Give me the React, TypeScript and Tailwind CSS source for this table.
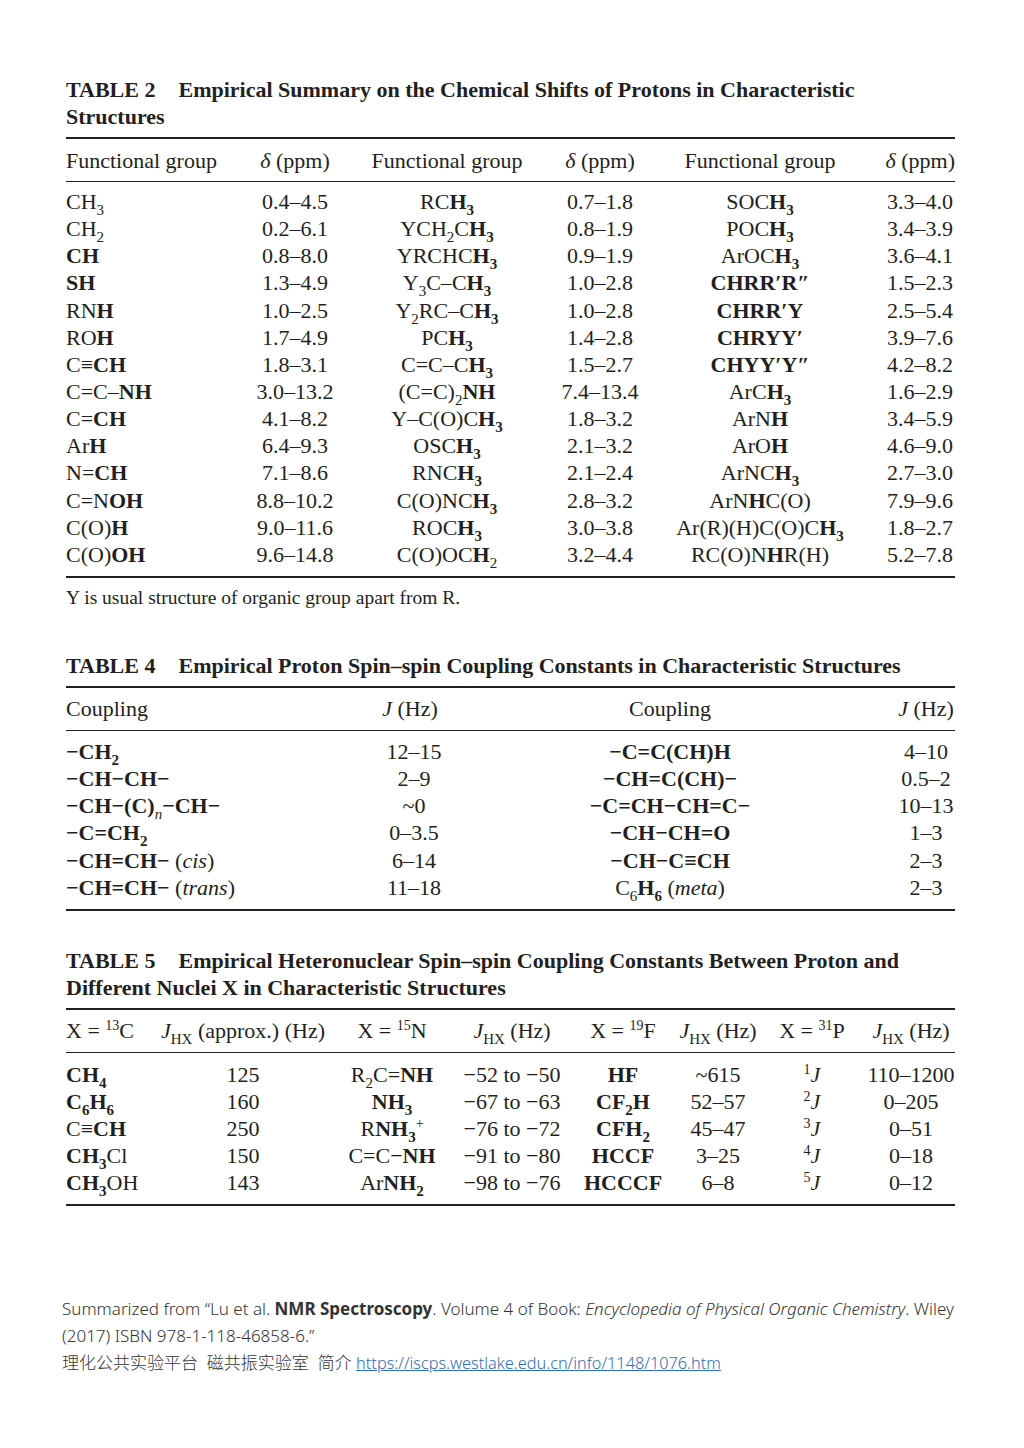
import React from "react";

type Align = "l" | "c" | "r";

const B: React.FC<{ children: React.ReactNode }> = ({ children }) => <b className="font-bold">{children}</b>;
const Sb: React.FC<{ children: React.ReactNode }> = ({ children }) => (
    <sub className="text-[15px] -bottom-[6px]">{children}</sub>
);
const Sp: React.FC<{ children: React.ReactNode }> = ({ children }) => (
    <sup className="text-[14px] -top-[8px]">{children}</sup>
);
const I: React.FC<{ children: React.ReactNode }> = ({ children }) => <i className="italic">{children}</i>;

// one inline span inside the flex box so subs/sups stay inline
const Cell: React.FC<{ a: Align; children?: React.ReactNode; className?: string }> = ({ a, children, className }) => {
    const j = a === "l" ? "justify-start" : a === "c" ? "justify-center" : "justify-end";
    return (
        <div className={`flex whitespace-nowrap ${j} ${className ?? ""}`}>
            <span>{children}</span>
        </div>
    );
};

const Title: React.FC<{ num: string; children: React.ReactNode }> = ({ num, children }) => (
    <h2 className="font-bold text-[22px] leading-[27px]">
        <span className="mr-[23px]">TABLE {num}</span>
        {children}
    </h2>
);

// ---------- Table 2 ----------
const t2Cols = "grid grid-cols-[160px_138px_166px_140px_180px_105px]";
const t2Align: Align[] = ["l", "c", "c", "c", "c", "r"];
const CH3b = <>C<B>H<Sb>3</Sb></B></>;

const t2Rows: React.ReactNode[][] = [
    [<>CH<Sb>3</Sb></>, "0.4–4.5", <>R{CH3b}</>, "0.7–1.8", <>SO{CH3b}</>, "3.3–4.0"],
    [<>CH<Sb>2</Sb></>, "0.2–6.1", <>YCH<Sb>2</Sb>{CH3b}</>, "0.8–1.9", <>PO{CH3b}</>, "3.4–3.9"],
    [<B>CH</B>, "0.8–8.0", <>YRCH{CH3b}</>, "0.9–1.9", <>ArO{CH3b}</>, "3.6–4.1"],
    [<B>SH</B>, "1.3–4.9", <>Y<Sb>3</Sb>C–{CH3b}</>, "1.0–2.8", <B>CHRR′R″</B>, "1.5–2.3"],
    [<>RN<B>H</B></>, "1.0–2.5", <>Y<Sb>2</Sb>RC–{CH3b}</>, "1.0–2.8", <B>CHRR′Y</B>, "2.5–5.4"],
    [<>RO<B>H</B></>, "1.7–4.9", <>P{CH3b}</>, "1.4–2.8", <B>CHRYY′</B>, "3.9–7.6"],
    [<>C≡<B>CH</B></>, "1.8–3.1", <>C=C–{CH3b}</>, "1.5–2.7", <B>CHYY′Y″</B>, "4.2–8.2"],
    [<>C=C–<B>NH</B></>, "3.0–13.2", <>(C=C)<Sb>2</Sb><B>NH</B></>, "7.4–13.4", <>Ar{CH3b}</>, "1.6–2.9"],
    [<>C=<B>CH</B></>, "4.1–8.2", <>Y–C(O){CH3b}</>, "1.8–3.2", <>ArN<B>H</B></>, "3.4–5.9"],
    [<>Ar<B>H</B></>, "6.4–9.3", <>OS{CH3b}</>, "2.1–3.2", <>ArO<B>H</B></>, "4.6–9.0"],
    [<>N=<B>CH</B></>, "7.1–8.6", <>RN{CH3b}</>, "2.1–2.4", <>ArN{CH3b}</>, "2.7–3.0"],
    [<>C=N<B>OH</B></>, "8.8–10.2", <>C(O)N{CH3b}</>, "2.8–3.2", <>ArN<B>H</B>C(O)</>, "7.9–9.6"],
    [<>C(O)<B>H</B></>, "9.0–11.6", <>RO{CH3b}</>, "3.0–3.8", <>Ar(R)(H)C(O){CH3b}</>, "1.8–2.7"],
    [<>C(O)<B>OH</B></>, "9.6–14.8", <>C(O)OC<B>H</B><Sb>2</Sb></>, "3.2–4.4", <>RC(O)N<B>H</B>R(H)</>, "5.2–7.8"],
];

// ---------- Table 4 ----------
const t4Cols = "grid grid-cols-[260px_168px_352px_109px]";
const t4Rows: React.ReactNode[][] = [
    [<B>−CH<Sb>2</Sb></B>, "12–15", <B>−C=C(CH)H</B>, "4–10"],
    [<B>−CH−CH−</B>, "2–9", <B>−CH=C(CH)−</B>, "0.5–2"],
    [<><B>−CH−(C)</B><Sb><I>n</I></Sb><B>−CH−</B></>, "~0", <B>−C=CH−CH=C−</B>, "10–13"],
    [<B>−C=CH<Sb>2</Sb></B>, "0–3.5", <B>−CH−CH=O</B>, "1–3"],
    [<><B>−CH=CH−</B> (<I>cis</I>)</>, "6–14", <B>−CH−C≡CH</B>, "2–3"],
    [<><B>−CH=CH−</B> (<I>trans</I>)</>, "11–18", <>C<Sb>6</Sb><B>H<Sb>6</Sb></B> (<I>meta</I>)</>, "2–3"],
];

// ---------- Table 5 ----------
const t5Cols = "grid grid-cols-[102px_150px_148px_92px_130px_60px_128px_70px]";
const JHX = <><I>J</I><Sb>HX</Sb></>;
const t5Head: React.ReactNode[] = [
    <>X = <Sp>13</Sp>C</>,
    <>{JHX} (approx.) (Hz)</>,
    <>X = <Sp>15</Sp>N</>,
    <>{JHX} (Hz)</>,
    <>X = <Sp>19</Sp>F</>,
    <>{JHX} (Hz)</>,
    <>X = <Sp>31</Sp>P</>,
    <>{JHX} (Hz)</>,
];
const t5Rows: React.ReactNode[][] = [
    [<B>CH<Sb>4</Sb></B>, "125", <>R<Sb>2</Sb>C=<B>NH</B></>, "−52 to −50", <B>HF</B>, "~615", <><Sp>1</Sp><I>J</I></>, "110–1200"],
    [<B>C<Sb>6</Sb>H<Sb>6</Sb></B>, "160", <B>NH<Sb>3</Sb></B>, "−67 to −63", <B>CF<Sb>2</Sb>H</B>, "52–57", <><Sp>2</Sp><I>J</I></>, "0–205"],
    [<>C≡<B>CH</B></>, "250", <>R<B>NH<Sb>3</Sb></B><Sp>+</Sp></>, "−76 to −72", <B>CFH<Sb>2</Sb></B>, "45–47", <><Sp>3</Sp><I>J</I></>, "0–51"],
    [<><B>CH<Sb>3</Sb></B>Cl</>, "150", <>C=C−<B>NH</B></>, "−91 to −80", <B>HCCF</B>, "3–25", <><Sp>4</Sp><I>J</I></>, "0–18"],
    [<><B>CH<Sb>3</Sb></B>OH</>, "143", <>Ar<B>NH<Sb>2</Sb></B></>, "−98 to −76", <B>HCCCF</B>, "6–8", <><Sp>5</Sp><I>J</I></>, "0–12"],
];

const App: React.FC = () => {
    return (
        <div className="w-[1024px] min-h-[1448px] bg-white text-[#231f20]">
            <div className="ml-[66px] w-[889px] pt-[76px] font-['Liberation_Serif',serif] text-[22px]">
                {/* TABLE 2 */}
                <Title num="2">
                    Empirical Summary on the Chemical Shifts of Protons in Characteristic
                    <br />
                    Structures
                </Title>
                <div className="mt-[7px] border-t-[2px] border-[#231f20]" />
                <div className={`${t2Cols} h-[42px] items-center`}>
                    <Cell a="l">Functional group</Cell>
                    <Cell a="c"><I>δ</I> (ppm)</Cell>
                    <Cell a="c">Functional group</Cell>
                    <Cell a="c"><I>δ</I> (ppm)</Cell>
                    <Cell a="c">Functional group</Cell>
                    <Cell a="r"><I>δ</I> (ppm)</Cell>
                </div>
                <div className="border-t-[1.5px] border-[#231f20]" />
                <div className="pt-[6px] pb-[8px]">
                    {t2Rows.map((row, i) => (
                        <div key={i} className={`${t2Cols} h-[27.15px] leading-[27px]`}>
                            {row.map((c, j) => (
                                <Cell key={j} a={t2Align[j]} className={j === 5 ? "pr-[2px]" : ""}>{c}</Cell>
                            ))}
                        </div>
                    ))}
                </div>
                <div className="border-t-[2px] border-[#231f20]" />
                <p className="mt-[8px] text-[19.5px] leading-[24px]">Y is usual structure of organic group apart from R.</p>

                {/* TABLE 4 */}
                <div className="mt-[42px]">
                    <Title num="4">Empirical Proton Spin–spin Coupling Constants in Characteristic Structures</Title>
                </div>
                <div className="mt-[7px] border-t-[2px] border-[#231f20]" />
                <div className={`${t4Cols} h-[42px] items-center`}>
                    <Cell a="l">Coupling</Cell>
                    <Cell a="c"><I>J</I> (Hz)</Cell>
                    <Cell a="c">Coupling</Cell>
                    <Cell a="c" className="pl-[51px]"><I>J</I> (Hz)</Cell>
                </div>
                <div className="border-t-[1.5px] border-[#231f20]" />
                <div className="pt-[7px] pb-[8px]">
                    {t4Rows.map((row, i) => (
                        <div key={i} className={`${t4Cols} h-[27.15px] leading-[27px]`}>
                            <Cell a="l">{row[0]}</Cell>
                            <Cell a="c" className="pl-[8px]">{row[1]}</Cell>
                            <Cell a="c">{row[2]}</Cell>
                            <Cell a="c" className="pl-[51px]">{row[3]}</Cell>
                        </div>
                    ))}
                </div>
                <div className="border-t-[2px] border-[#231f20]" />

                {/* TABLE 5 */}
                <div className="mt-[36px]">
                    <Title num="5">
                        Empirical Heteronuclear Spin–spin Coupling Constants Between Proton and
                        <br />
                        Different Nuclei X in Characteristic Structures
                    </Title>
                </div>
                <div className="mt-[7px] border-t-[2px] border-[#231f20]" />
                <div className={`${t5Cols} h-[42px] items-center`}>
                    {t5Head.map((c, j) => (
                        <Cell key={j} a={j === 0 ? "l" : "c"}>{c}</Cell>
                    ))}
                </div>
                <div className="border-t-[1.5px] border-[#231f20]" />
                <div className="pt-[8px] pb-[8px]">
                    {t5Rows.map((row, i) => (
                        <div key={i} className={`${t5Cols} h-[27.1px] leading-[27px]`}>
                            {row.map((c, j) => (
                                <Cell key={j} a={j === 0 ? "l" : "c"}>{c}</Cell>
                            ))}
                        </div>
                    ))}
                </div>
                <div className="border-t-[2px] border-[#231f20]" />

                {/* source note */}
                <div className="-ml-[4px] mt-[89px] font-['Noto_Sans','Noto_Sans_CJK_SC',sans-serif] font-light text-[17px] leading-[27px] text-[#333333]">
                    <div className="whitespace-nowrap">
                        Summarized from “Lu et al. <span className="font-bold">NMR Spectroscopy</span>. Volume 4 of Book:{" "}
                        <I>Encyclopedia of Physical Organic Chemistry</I>. Wiley
                    </div>
                    <div className="whitespace-nowrap">(2017) ISBN 978-1-118-46858-6.”</div>
                    <div className="whitespace-nowrap">
                        理化公共实验平台&nbsp;&nbsp;磁共振实验室&nbsp;&nbsp;简介{" "}
                        <a href="#" className="text-[16.3px] text-[#2f6eba] underline">https://iscps.westlake.edu.cn/info/1148/1076.htm</a>
                    </div>
                </div>
            </div>
        </div>
    );
};

export default App;
